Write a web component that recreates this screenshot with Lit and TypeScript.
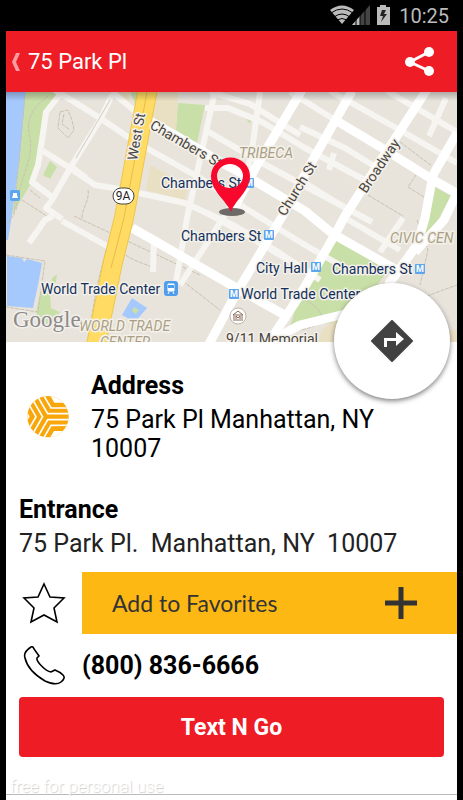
import { LitElement, html, svg, css } from "lit";
import { customElement } from "lit/decorators.js";

// Street geometry, in the map's own coordinate space.
const MINOR_ROADS = [
  "M112 95L100 120L72 165L52 200L46 208L62 219",
  "M62 92L46 112L42 140L38 165L32 182L52 197",
  "M50 87L100 118L128 137L150 150L200 178L245 208L305 245L345 268",
  "M112 92L136 112",
  "M43 151L70 168L95 185L125 190L185 203L235 226L275 250L320 280",
  "M70 166L86 178",
  "M62 221L107 246",
  "M215 91L187 218L176 282",
  "M260 92L252 150L246 178",
  "M302 90L225 215L180 285",
  "M205 108L228 108L262 122L305 148L372 184",
  "M210 92L250 104L300 135",
  "M207 131L262 163L305 186L372 222",
  "M290 92L335 120",
  "M330 91L400 130L457 163",
  "M387 91L457 132",
  "M300 127L345 148L374 166",
  "M446 98L429 136",
  "M334 153L329 170",
  "M205 212L255 240L305 270",
  "M345 218L400 250",
  "M403 218L380 252",
  "M53 216L45 220L29 243",
  "M154 240L153 272",
  "M300 180L352 212",
];
const MAJOR_ROADS = [
  "M352 91L310 165L283 215L237 292L208 346",
  "M302 90L257 165L232 212",
  "M428 88L387 151L345 216L333 238L300 295L267 345",
  "M337 121L387 151L430 178L458 194",
  "M150 121L217 160L250 178L305 211L333 234L402 273",
  "M132 228L155 241L233 286L290 318",
  "M457 133L433 175L425 218L417 245L388 285",
  "M457 193L444 220L415 252",
  "M267 343L300 325L345 314",
];
const PATHS = [
  "M25 96L18 170L14 215L6 225",
  "M48 96C30 110 26 120 30 138C34 160 20 175 16 210",
  "M60 112L68 110L72 120L74 130L68 138L58 128ZM64 114L62 124L70 130",
  "M88 190C90 200 82 208 82 218",
  "M30 190L40 198M22 200L50 218",
  "M74 216L200 275",
  "M106 250L96 290L88 341",
  "M6 255L45 261L38 312L6 307",
  "M175 275L220 310",
  "M122 252C130 260 145 264 155 268",
  "M400 142L432 166M368 195L403 216M424 197L408 187L416 175",
  "M417 220L428 250L420 285M395 320C410 300 430 295 457 285",
  "M305 300C325 310 330 325 300 330",
];

type Label = [text: string, x: number, y: number, rotate?: number];
const STATIONS: Label[] = [
  ["Chambers St", 161, 188],
  ["Chambers St", 181, 241],
  ["City Hall", 256, 273],
  ["Chambers St", 332, 274],
  ["World Trade Center", 41, 294],
  ["World Trade Center", 241, 299],
];
const STREETS: Label[] = [
  ["West St", 137, 161, -80],
  ["Chambers St", 149, 128, 30],
  ["Church St", 285, 217, -58],
  ["Broadway", 366, 194, -56],
  ["9/11 Memorial", 226, 344],
];
const AREAS: Label[] = [
  ["TRIBECA", 239, 158],
  ["CIVIC CEN", 390, 243],
  ["WORLD TRADE", 79, 331],
  ["CENTER", 100, 347],
];
const METRO: [number, number][] = [
  [244, 178],
  [264, 230],
  [311, 262],
  [415, 264],
  [229, 289],
];

const label = ([text, x, y, r = 0]: Label) =>
  svg`<text transform="translate(${x} ${y}) rotate(${r})">${text}</text>`;

@customElement("street-map")
export class StreetMap extends LitElement {
  static styles = css`
    :host { display: block; }
    svg { display: block; width: 100%; height: 250px; }
    text { font-family: Roboto, sans-serif; font-size: 14px; paint-order: stroke; stroke: #f4f1ea; stroke-width: 3px; stroke-linejoin: round; }
    .stations text { fill: #12305c; }
    .streets text { fill: #4a453f; }
    .areas text { fill: #aa9f86; font-style: italic; }
    .metro text { fill: #fff; stroke: none; font-size: 9px; font-weight: 700; text-anchor: middle; }
    .shield text { fill: #222; stroke: none; font-size: 12px; text-anchor: middle; }
    .google text { font-family: "Liberation Serif", serif; font-size: 23px; fill: #8d8a87; stroke: #f2f0ec; }
    .minor { fill: none; stroke: #f7f5f1; stroke-width: 6px; stroke-linejoin: round; }
    .major { fill: none; stroke: #fff; stroke-width: 9px; stroke-linejoin: round; }
    .trail { fill: none; stroke: #c9c2b2; stroke-width: 1px; stroke-dasharray: 4 1; }
    .park { fill: #c9dfa8; }
    .water { fill: #a5c8fd; }
    .sand { fill: #e9dfc2; }
  `;

  render() {
    return html`<svg viewBox="6 92 451 250" preserveAspectRatio="xMidYMid slice" role="img" aria-label="Map around 75 Park Pl">
      <defs>
        <linearGradient id="shade" x1="0" y1="0" x2="0" y2="1">
          <stop offset="0" stop-color="#000" stop-opacity=".25"></stop>
          <stop offset="1" stop-color="#000" stop-opacity="0"></stop>
        </linearGradient>
      </defs>
      <rect x="6" y="92" width="451" height="250" fill="#e8e4dc"></rect>
      <path class="water" d="M6 92H26L20 160L12 215L8 240H6ZM7 256L22 258L24 262L27 259L42 263L38 285L33 308L7 306ZM132 298L147 308L135 322L122 315Z"></path>
      <path class="park" d="M26 92H64L46 112L38 165L32 182L12 215L20 160ZM50 161L57 167L50 179L43 175ZM178 103L205 105L197 143L176 130ZM130 92H138L136 105ZM243 115L252 117L250 124ZM250 160L255 165L250 172ZM337 240L390 268L350 322L290 326L300 298L310 275ZM433 186L451 196L436 224L420 238ZM41 290L50 292L51 308L60 312L52 325L40 322L36 312ZM296 303L306 298V320L292 322ZM52 278L57 274L56 282L51 286ZM134 307L139 310L136 314L132 311Z"></path>
      <path class="sand" d="M152 92H178L176 130L150 118ZM150 165L188 186L185 200L146 190ZM115 92H130L128 108ZM322 330L336 320V342H318ZM450 330H457V342H445Z"></path>
      ${PATHS.map((d) => svg`<path class="trail" d=${d}></path>`)}
      ${MINOR_ROADS.map((d) => svg`<path class="minor" d=${d}></path>`)}
      <path d="M110 100L76 158" stroke="#d2ccc0" stroke-width="1"></path>
      ${MAJOR_ROADS.map((d) => svg`<path class="major" d=${d}></path>`)}
      <path d="M148 88L124 218L113 262L96 345" fill="none" stroke="#eec64a" stroke-width="20"></path>
      <path d="M148 88L124 218L113 262L96 345" fill="none" stroke="#ffdb63" stroke-width="18"></path>
      <path d="M147 92L124 218L111 268" fill="none" stroke="#e5bd4b" stroke-width="1"></path>
      <g class="areas">${AREAS.map(label)}</g>
      <g class="streets">${STREETS.map(label)}</g>
      <g class="stations">${STATIONS.map(label)}</g>
      <g class="metro">${METRO.map(([x, y]) => svg`
        <rect x=${x} y=${y} width="10" height="10" rx="1" fill="#5ba6ee"></rect>
        <text x=${x + 5} y=${y + 8}>M</text>`)}
      </g>
      <g transform="translate(164 281)">
        <rect width="14" height="15" rx="3" fill="#4f9dec"></rect>
        <path d="M4 3H10V10H4ZM4 13L5 11M10 13L9 11" fill="#fff" stroke="#fff"></path>
        <path d="M4 4H10V7H4Z" fill="#4f9dec"></path>
      </g>
      <g transform="translate(10 190)">
        <rect width="10" height="11" rx="2" fill="#5ba6ee"></rect>
        <path d="M2 8H8L7 5V3H3V5Z" fill="#fff"></path>
      </g>
      <g transform="translate(238 316)">
        <circle r="8" fill="#fff" stroke="#bdb6aa"></circle>
        <path d="M-5 -1L0 -5L5 -1ZM-5 4H5M-4 0V3M4 0V3M-2 3V0L0 2L2 0V3" fill="none" stroke="#8a6550"></path>
      </g>
      <g class="shield">
        <rect x="113" y="188" width="21" height="16" rx="8" fill="#fff" stroke="#444"></rect>
        <text x="123" y="200">9A</text>
      </g>
      <g class="google"><text x="13" y="327">Google</text></g>
      <ellipse cx="232" cy="212" rx="13" ry="4" fill="#6d6a68"></ellipse>
      <path fill-rule="evenodd" fill="#f8082c" d="M231 212C226 200 211 191 211 176A19 18 0 0 1 250 176C250 191 235 200 231 212ZM230 164A13 12 0 1 0 230 188A13 12 0 1 0 230 164Z"></path>
      <rect x="6" y="92" width="451" height="9" fill="url(#shade)"></rect>
    </svg>`;
  }
}

@customElement("app-root")
export class AppRoot extends LitElement {
  static styles = css`
    :host { display: block; min-height: 100vh; background: #000; color: #000; font-family: Roboto, sans-serif; font-size: 25px; line-height: 29px; }
    * { box-sizing: border-box; }
    svg { display: block; flex: none; }
    button { font: inherit; color: inherit; border: 0; padding: 0; background: none; cursor: pointer; }
    .screen { margin: 0 6px; min-height: 100vh; display: flex; flex-direction: column; background: #fff; }
    .status { height: 31px; background: #000; color: #bbb; display: flex; align-items: center; justify-content: flex-end; gap: 8px; padding: 1px 8px 0 0; font-size: 20px; }
    .bar { height: 61px; background: #ee1c25; color: #fff; display: flex; align-items: center; justify-content: space-between; padding: 0 22px 0 6px; }
    .back { display: flex; align-items: center; gap: 8px; }
    h1, h2, p { margin: 0; font-size: inherit; font-weight: inherit; }
    h2 { font-weight: 700; }
    .title { font-size: 22px; }
    .map { position: relative; }
    .go { position: absolute; right: 7px; bottom: -57px; width: 116px; height: 116px; border-radius: 50%; background: #fff; box-shadow: 0 2px 5px rgba(0, 0, 0, .5); display: grid; place-items: center; }
    .address { display: grid; grid-template-columns: 43px 1fr; column-gap: 22px; align-items: center; padding: 29px 60px 0 20px; }
    .lines { display: grid; gap: 5px; }
    .entrance { display: grid; gap: 5px; padding: 32px 13px 0; }
    .light { color: #222; white-space: pre-wrap; }
    .row { display: grid; grid-template-columns: 76px 1fr; align-items: center; }
    .row > svg { justify-self: center; }
    .favorite { margin-top: 14px; }
    .add { height: 62px; background: #fdb813; color: #333; display: flex; align-items: center; justify-content: space-between; padding: 0 40px 0 30px; font-family: Lato, sans-serif; font-size: 23px; }
    .phone { height: 63px; }
    .phone a { color: #000; font-weight: 700; text-decoration: none; }
    .text { height: 60px; margin: 0 13px; border-radius: 4px; background: #ee1c25; color: #fff; font-size: 23px; font-weight: 700; }
    .mark { margin-top: 14px; height: 24px; padding-left: 4px; border-bottom: 1px solid #bbb; font-size: 17px; line-height: 30px; font-weight: 300; color: #fff; text-shadow: 1px 1px 1px #ccc; }
  `;

  render() {
    return html`<main class="screen">
      <div class="status">
        <svg width="61" height="22" viewBox="332 5 61 22" aria-hidden="true">
          <path d="M344 24L332 10Q344 1 356 10Z" fill="#bbb"></path>
          <path d="M333 13Q344 5 355 13M336 17Q344 11 352 17M339 20Q344 17 349 20" fill="none" stroke="#000" stroke-width="1"></path>
          <path d="M354 25L372 5V25Z" fill="#444"></path>
          <path d="M354 25L362 16V25Z" fill="#bbb"></path>
          <path d="M358 25V14M362 25V12M367 25V9" stroke="#000" stroke-width="1"></path>
          <path d="M379 7H382V5H388V7H392V25H379Z" fill="#bbb"></path>
          <path d="M384 10H388L386 14H389L383 22L385 16H382Z" fill="#222"></path>
        </svg>
        <span>10:25</span>
      </div>
      <header class="bar">
        <button class="back" aria-label="Back">
          <svg width="8" height="18" viewBox="0 0 8 18"><path d="M4 0H8L4 9L8 18H4L0 9Z" fill="#f99ba0"></path></svg>
          <h1 class="title">75 Park Pl</h1>
        </button>
        <button aria-label="Share">
          <svg width="30" height="30" viewBox="2 0 30 30">
            <path d="M26 5L7 15L26 24" fill="none" stroke="#fff" stroke-width="3"></path>
            <circle cx="26" cy="5" r="5" fill="#fff"></circle><circle cx="7" cy="15" r="5" fill="#fff"></circle><circle cx="26" cy="24" r="5" fill="#fff"></circle>
          </svg>
        </button>
      </header>
      <section class="map">
        <street-map></street-map>
        <button class="go" aria-label="Directions">
          <svg width="42" height="42" viewBox="0 0 42 42">
            <path d="M21 1L41 21L21 41L1 21Z" fill="#424242" stroke="#424242" stroke-width="2" stroke-linejoin="round"></path>
            <path d="M13 27V18H25V12L33 19L25 26V21H16V27Z" fill="#fff"></path>
          </svg>
        </button>
      </section>
      <section class="address">
        <svg width="43" height="43" viewBox="-60 -62 129 129" aria-hidden="true">
          <defs><clipPath id="disc"><circle cx="6" r="62"></circle></clipPath></defs>
          <g clip-path="url(#disc)">
            <rect x="-60" y="-65" width="129" height="129" fill="#f9a60a"></rect>
            ${[0, 120, 240].map((r) => svg`<g transform="rotate(${r})">
              <path d="M-45 -95L5 -9H100M-35 -112L15 -26H100" fill="none" stroke="#fff" stroke-width="5"></path>
              <path d="M-40 -155L25 -42H100V-155Z" fill="#fff"></path>
            </g>`)}
          </g>
        </svg>
        <div class="lines">
          <h2>Address</h2>
          <p>75 Park Pl Manhattan, NY 10007</p>
        </div>
      </section>
      <section class="entrance">
        <h2>Entrance</h2>
        <p class="light">75 Park Pl.  Manhattan, NY  10007</p>
      </section>
      <div class="row favorite">
        <svg width="44" height="42" viewBox="0 0 44 42" aria-hidden="true"><path d="M22 2L28 15L42 16L32 26L35 40L22 33L9 40L12 26L2 16L16 15Z" fill="none" stroke="#000" stroke-width="1.6"></path></svg>
        <button class="add"><span>Add to Favorites</span>
          <svg width="32" height="32" viewBox="0 0 32 32" aria-hidden="true"><path d="M0 16H32M16 0V32" stroke="#333" stroke-width="5"></path></svg>
        </button>
      </div>
      <div class="row phone">
        <svg width="42" height="40" viewBox="0 0 42 40" aria-hidden="true"><path d="M8 1Q10 0 11 3L16 10Q15 11 14 12C13 15 22 25 28 26L32 24Q37 26 40 29Q43 32 38 36Q33 40 22 35Q5 25 2 12Q0 6 8 1Z" fill="none" stroke="#000" stroke-width="1.6"></path></svg>
        <a href="tel:8008366666">(800) 836-6666</a>
      </div>
      <button class="text">Text N Go</button>
      <div class="mark">free for personal use</div>
    </main>`;
  }
}
